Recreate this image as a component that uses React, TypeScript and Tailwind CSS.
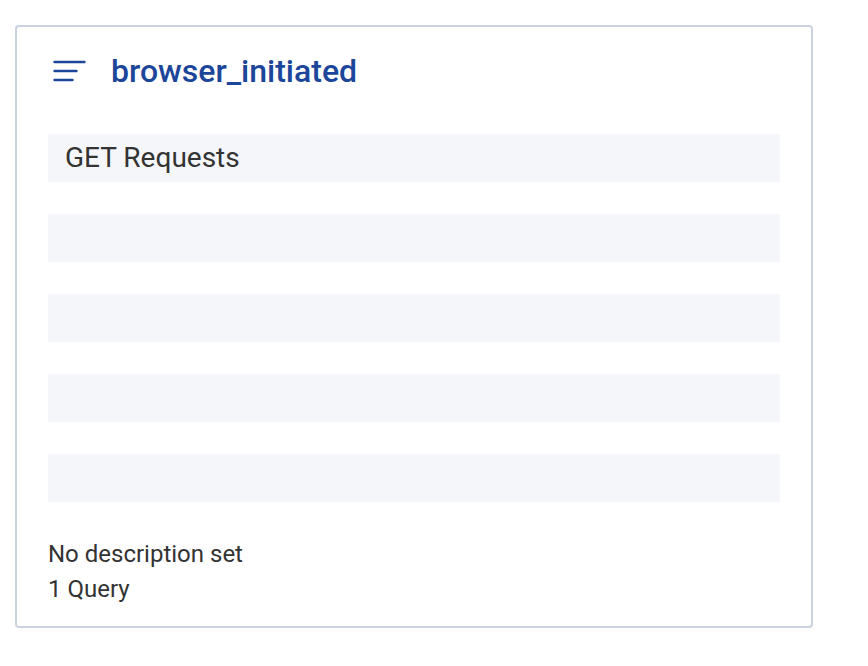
export default function App() {
  const rows = ['GET Requests', '', '', '', ''];

  return (
    <div className="min-h-screen bg-white" style={{ fontFamily: 'Roboto, "Liberation Sans", sans-serif' }}>
      <div className="pl-[15px] pt-[25px]">
        <div className="w-[798px] h-[603px] rounded-[4px] border-2 border-[#c9d2de] bg-white px-[31px] pt-[25px]">
          {/* header */}
          <div className="flex items-center h-[38px]">
            <svg className="ml-[5px] w-[34px] h-[24px]" viewBox="0 0 34 24" fill="none" stroke="#1b4699" strokeWidth={2.4} strokeLinecap="round">
              <path d="M1.5 3h30" />
              <path d="M1.5 12h22" />
              <path d="M1.5 21h18" />
            </svg>
            <h1 className="ml-[24px] text-[32px] font-medium leading-none text-[#1b4699]">browser_initiated</h1>
          </div>

          {/* query rows */}
          <div className="mt-[44px] flex flex-col gap-[32px]">
            {rows.map((r, i) => (
              <div key={i} className="h-[48px] bg-[#f5f6fa] px-[17px] flex items-center text-[28px] text-[#333]">
                {r}
              </div>
            ))}
          </div>

          <div className="mt-[35px] text-[24px] leading-[35px] text-[#333]">
            <p>No description set</p>
            <p>1 Query</p>
          </div>
        </div>
      </div>
    </div>
  );
}
